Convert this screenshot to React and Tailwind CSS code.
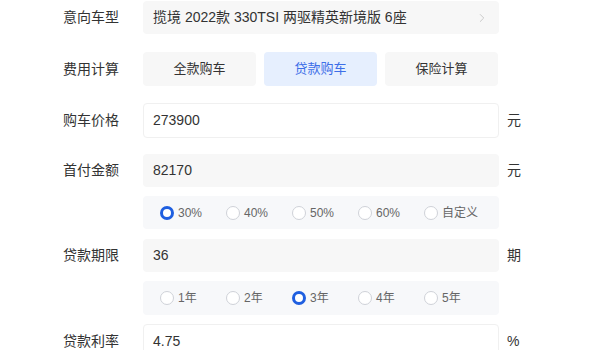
import { ChevronRight } from 'lucide-react';

function Radio({ label, checked }) {
  return (
    <div className="flex w-[66px] items-center gap-[4px]">
      <span
        className={
          checked
            ? 'h-[14px] w-[14px] rounded-full border-[3px] border-[#1f5fe0] bg-white'
            : 'h-[14px] w-[14px] rounded-full border border-[#cfd2d8] bg-white'
        }
      />
      <span className="text-[12px] text-[#666]">{label}</span>
    </div>
  );
}

function Row({ label, unit, children, className = '' }) {
  return (
    <div className={'flex items-center ' + className}>
      <div className="w-[143px] shrink-0 pl-[63px] text-[14px] text-[#333]">{label}</div>
      <div className="w-[356px] shrink-0">{children}</div>
      <div className="pl-[8px] text-[14px] text-[#333]">{unit}</div>
    </div>
  );
}

export default function App() {
  const down = ['30%', '40%', '50%', '60%', '自定义'];
  const years = ['1年', '2年', '3年', '4年', '5年'];

  return (
    <div
      className="h-[350px] w-[600px] overflow-hidden bg-white pt-[1px]"
      style={{ fontFamily: '"Liberation Sans", "Noto Sans CJK SC", sans-serif' }}
    >
      {/* 意向车型 */}
      <Row label="意向车型">
        <div className="flex h-[33px] items-center justify-between rounded-[4px] bg-[#f7f7f7] pl-[10px] pr-[10px]">
          <span className="text-[14px] text-[#333]">揽境 2022款 330TSI 两驱精英新境版 6座</span>
          <ChevronRight size={14} strokeWidth={1.5} className="text-[#c4c4c4]" />
        </div>
      </Row>

      {/* 费用计算 */}
      <Row label="费用计算" className="mt-[18px]">
        <div className="flex gap-[8px]">
          <div className="flex h-[34px] w-[113px] items-center justify-center rounded-[4px] bg-[#f7f7f7] text-[13px] text-[#333]">
            全款购车
          </div>
          <div className="flex h-[34px] w-[113px] items-center justify-center rounded-[4px] bg-[#e6effe] text-[13px] text-[#3d6ee8]">
            贷款购车
          </div>
          <div className="flex h-[34px] w-[113px] items-center justify-center rounded-[4px] bg-[#f7f7f7] text-[13px] text-[#333]">
            保险计算
          </div>
        </div>
      </Row>

      {/* 购车价格 */}
      <Row label="购车价格" unit="元" className="mt-[17px]">
        <div className="flex h-[35px] items-center rounded-[4px] border border-[#f0f0f0] bg-white pl-[9px] text-[14px] text-[#333]">
          273900
        </div>
      </Row>

      {/* 首付金额 */}
      <Row label="首付金额" unit="元" className="mt-[16px]">
        <div className="flex h-[33px] items-center rounded-[4px] bg-[#f7f7f7] pl-[10px] text-[14px] text-[#333]">
          82170
        </div>
      </Row>

      <Row className="mt-[9px]">
        <div className="flex h-[33px] items-center rounded-[4px] bg-[#f7f8fa] pl-[17px]">
          {down.map((d, i) => (
            <Radio key={d} label={d} checked={i === 0} />
          ))}
        </div>
      </Row>

      {/* 贷款期限 */}
      <Row label="贷款期限" unit="期" className="mt-[10px]">
        <div className="flex h-[33px] items-center rounded-[4px] bg-[#f7f7f7] pl-[10px] text-[14px] text-[#333]">
          36
        </div>
      </Row>

      <Row className="mt-[9px]">
        <div className="flex h-[34px] items-center rounded-[4px] bg-[#f7f8fa] pl-[17px]">
          {years.map((d, i) => (
            <Radio key={d} label={d} checked={i === 2} />
          ))}
        </div>
      </Row>

      {/* 贷款利率 */}
      <Row label="贷款利率" unit="%" className="mt-[9px]">
        <div className="flex h-[35px] items-center rounded-[4px] border border-[#f0f0f0] bg-white pl-[9px] text-[14px] text-[#333]">
          4.75
        </div>
      </Row>
    </div>
  );
}
